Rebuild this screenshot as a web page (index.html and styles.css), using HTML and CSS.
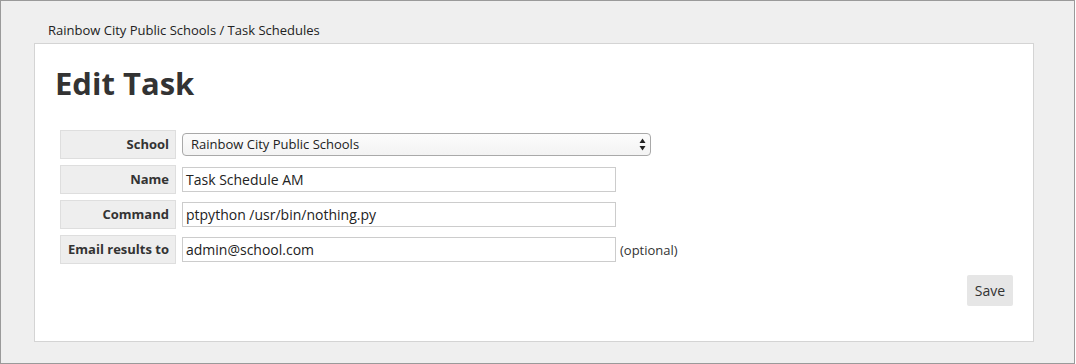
FILE: index.html
```html
<!DOCTYPE html>
<html>
<head>
<meta charset="utf-8">
<link rel="stylesheet" href="styles.css">
</head>
<body>
<div class="frame">
  <div class="breadcrumb">Rainbow City Public Schools / Task Schedules</div>
  <div class="card">
    <h1 class="title">Edit Task</h1>
    <div class="form">
      <div class="label">School</div>
      <div class="field">
        <div class="select">
          <span>Rainbow City Public Schools</span>
          <svg class="arrows" width="7" height="13" viewBox="0 0 7 13"><path d="M3.5 0.5 L6.5 5 L0.5 5 Z" fill="#222"/><path d="M0.5 8 L6.5 8 L3.5 12.5 Z" fill="#222"/></svg>
        </div>
      </div>
      <div class="label">Name</div>
      <div class="field"><div class="input">Task Schedule AM</div></div>
      <div class="label">Command</div>
      <div class="field"><div class="input">ptpython /usr/bin/nothing.py</div></div>
      <div class="label">Email results to</div>
      <div class="field"><div class="input">admin@school.com</div><span class="hint">(optional)</span></div>
    </div>
    <div class="actions"><button class="save">Save</button></div>
  </div>
</div>
</body>
</html>
```

FILE: styles.css
```css
html, body {
  margin: 0;
  padding: 0;
  background: #ffffff;
}
body {
  font-family: "Open Sans", "DejaVu Sans", sans-serif;
  color: #333;
}
.frame {
  box-sizing: border-box;
  width: 1075px;
  height: 364px;
  border: 1px solid #9a9a9a;
  background: #efefef;
  padding: 20px 0 0 33px;
}
.breadcrumb {
  font-size: 13px;
  line-height: 18px;
  color: #222;
  padding-left: 14px;
  margin-bottom: 4px;
}
.card {
  box-sizing: border-box;
  width: 1000px;
  height: 299px;
  background: #fff;
  border: 1px solid #d4d4d4;
  padding: 0 20px;
}
.title {
  margin: 19px 0 27px 0;
  font-size: 31px;
  line-height: 40px;
  font-weight: 700;
  color: #333;
}
.form {
  display: grid;
  grid-template-columns: 116px auto;
  grid-auto-rows: 29px;
  column-gap: 6px;
  row-gap: 6px;
  margin-left: 5px;
}
.label {
  box-sizing: border-box;
  background: #eeeeee;
  border: 1px solid #dedede;
  font-size: 13px;
  font-weight: 700;
  text-align: right;
  padding-right: 6px;
  line-height: 27px;
  color: #333;
}
.field {
  display: flex;
  align-items: center;
  gap: 4px;
}
.input {
  box-sizing: border-box;
  width: 434px;
  height: 25px;
  border: 1px solid #cccccc;
  background: #fff;
  font-size: 14px;
  line-height: 23px;
  padding-left: 3px;
  color: #222;
}
.select {
  box-sizing: border-box;
  width: 469px;
  height: 23px;
  border: 1px solid #a9a9a9;
  border-radius: 4px;
  background: linear-gradient(#fcfcfc, #f3f3f3);
  font-size: 13px;
  line-height: 21px;
  padding: 0 4px 0 8px;
  display: flex;
  align-items: center;
  justify-content: space-between;
  color: #222;
}
.arrows {
  display: block;
}
.hint {
  font-size: 13px;
  color: #333;
}
.actions {
  display: flex;
  justify-content: flex-end;
  margin-top: 11px;
}
.save {
  width: 46px;
  height: 31px;
  border: none;
  border-radius: 2px;
  background: #e6e6e6;
  font-family: "Open Sans", "DejaVu Sans", sans-serif;
  font-size: 14px;
  color: #333;
  padding: 0;
}
```
